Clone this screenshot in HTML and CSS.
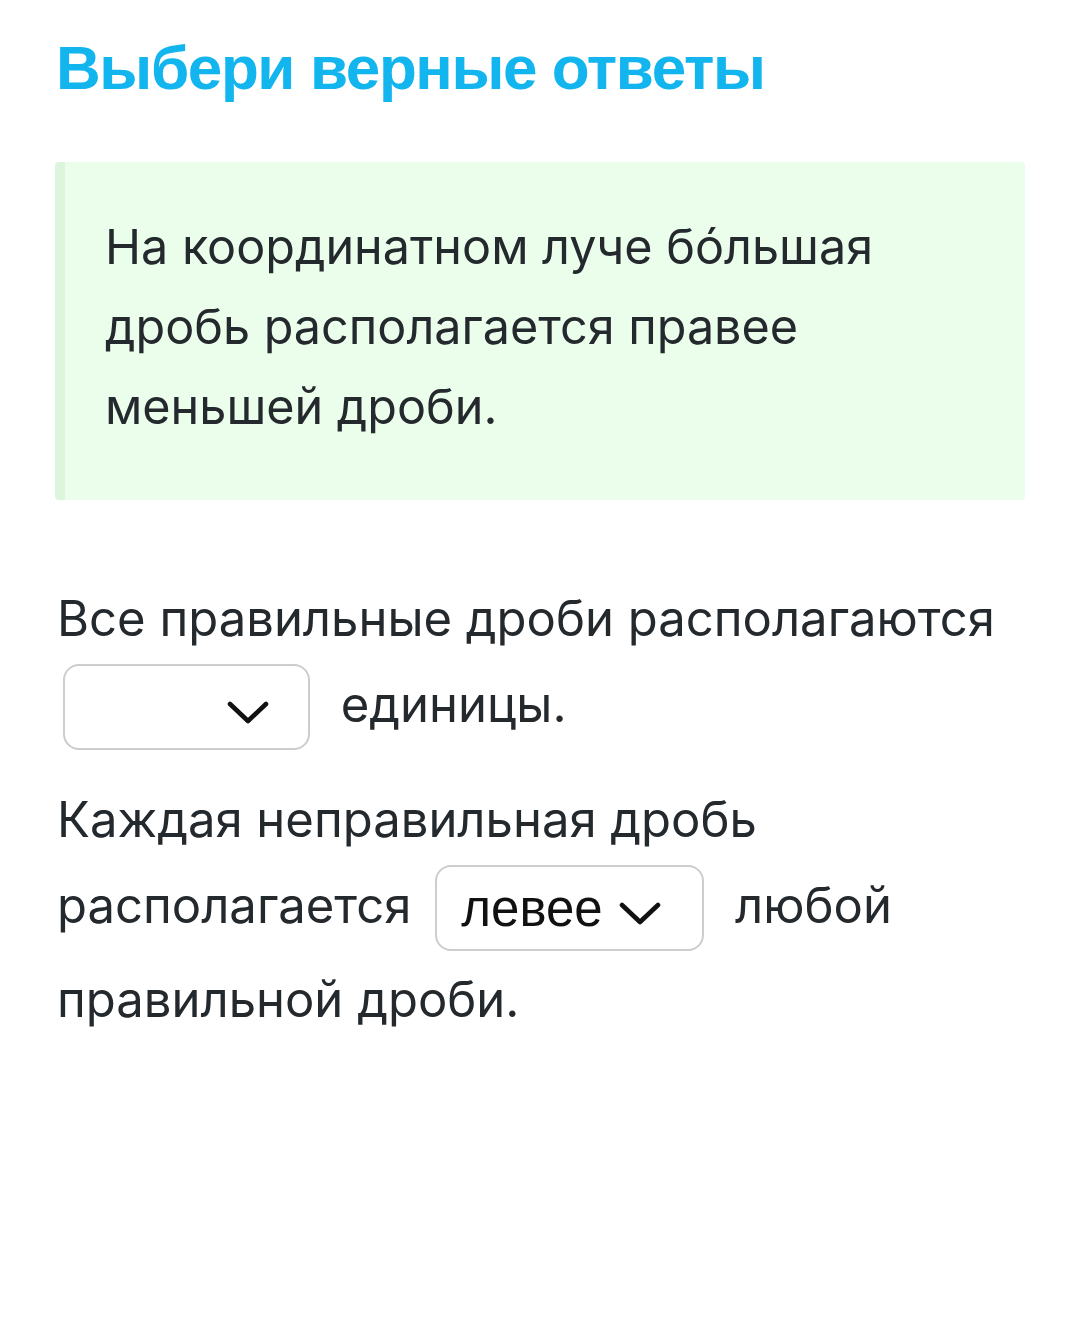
FILE: index.html
```html
<!DOCTYPE html>
<html lang="ru">
<head>
<meta charset="utf-8">
<link rel="stylesheet" href="styles.css">
</head>
<body>
<div class="page">
  <h1 class="title">Выбери верные ответы</h1>
  <div class="note">
    <p class="note-text">На координатном луче бо́льшая дробь располагается правее меньшей дроби.</p>
  </div>
  <div class="task">
    <p class="line">Все правильные дроби располагаются <span class="select s1"><span class="val"></span><svg class="chev" viewBox="0 0 42 24"><path d="M3 3 L21 20 L39 3" fill="none" stroke="#111" stroke-width="4.6" stroke-linecap="round" stroke-linejoin="round"/></svg></span> единицы.</p>
    <p class="line">Каждая неправильная дробь располагается <span class="select s2"><span class="val">левее</span><svg class="chev" viewBox="0 0 42 24"><path d="M3 3 L21 20 L39 3" fill="none" stroke="#111" stroke-width="4.6" stroke-linecap="round" stroke-linejoin="round"/></svg></span> любой правильной дроби.</p>
  </div>
</div>
</body>
</html>
```
FILE: styles.css
```css
html, body {
  margin: 0;
  padding: 0;
  background: #ffffff;
}
.page {
  width: 1080px;
  padding: 0 55px;
  box-sizing: border-box;
  font-family: "Inter", "Noto Sans", sans-serif;
  color: #24292e;
}
.title {
  margin: 0;
  padding-top: 28px;
  padding-left: 1px;
  font-family: "Liberation Sans", Arial, sans-serif;
  font-weight: 700;
  font-size: 62px;
  line-height: 80px;
  letter-spacing: -1.4px;
  color: #12b5ee;
}
.note {
  margin-top: 54px;
  background: #ebfdeb;
  border-left: 10px solid #ddf4dd;
  border-radius: 4px;
  height: 338px;
  box-sizing: border-box;
  padding: 45px 30px 0 40px;
}
.note-text {
  margin: 0;
  font-size: 48.5px;
  line-height: 80px;
}
.task {
  margin-top: 77px;
  padding-left: 2px;
}
.line {
  margin: 0;
  font-size: 49px;
  line-height: 84px;
}
.line + .line {
  margin-top: 21px;
}
.select {
  display: inline-flex;
  align-items: center;
  box-sizing: border-box;
  height: 86px;
  vertical-align: middle;
  border: 2px solid #cdcdcd;
  border-radius: 16px;
  background: #fff;
  margin: 0 17px 10px 6px;
  position: relative;
  top: 3px;
}
.s1 {
  width: 247px;
  padding-left: 162px;
}
.s2 {
  width: 269px;
  padding-left: 24px;
  margin-left: 10px;
}
.val {
  font-family: "Liberation Sans", Arial, sans-serif;
  font-size: 51px;
  color: #111;
  line-height: 1;
}
.s2 .val {
  margin-right: 16px;
}
.chev {
  width: 42px;
  height: 24px;
  margin-top: 12px;
}
```
